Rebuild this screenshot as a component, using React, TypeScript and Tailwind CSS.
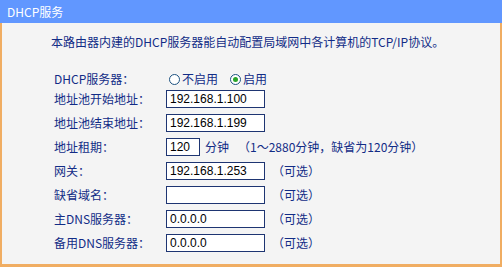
const FONT = "font-['SimSun','Noto_Sans_CJK_SC',sans-serif]";

type Row = {
  label: string;
  value?: string;
  width?: string;
  note?: React.ReactNode;
};

const ROWS: Row[] = [
  { label: "地址池开始地址：", value: "192.168.1.100" },
  { label: "地址池结束地址：", value: "192.168.1.199" },
  {
    label: "地址租期：",
    value: "120",
    width: "w-[34px]",
    note: (
      <>
        <span className="ml-[5px]">分钟</span>
        <span className="ml-[9px]">（1～2880分钟，缺省为120分钟）</span>
      </>
    ),
  },
  { label: "网关：", value: "192.168.1.253", note: "（可选）" },
  { label: "缺省域名：", value: "", note: "（可选）" },
  { label: "主DNS服务器：", value: "0.0.0.0", note: "（可选）" },
  { label: "备用DNS服务器：", value: "0.0.0.0", note: "（可选）" },
];

function Radio({ checked, label }: { checked?: boolean; label: string }) {
  return (
    <span className="flex items-center">
      <span className="w-[11px] h-[11px] rounded-full border border-[#1c5180] bg-white flex items-center justify-center">
        {checked && <span className="w-[5px] h-[5px] rounded-full bg-[#2aa52a]" />}
      </span>
      <span className="ml-[2px]">{label}</span>
    </span>
  );
}

export default function App() {
  return (
    <div className={`w-[502px] h-[267px] flex flex-col text-[12px] leading-[16px] text-[#122c86] ${FONT}`}>
      {/* 标题栏 */}
      <div className="h-[23px] bg-[#6197ff] text-white flex items-center pl-[7px] shrink-0">
        DHCP服务
      </div>

      <div className="flex-1 bg-[#f4f4f4] border-l-2 border-r-2 border-b-[3px] border-[#f0ad62] pl-[49px]">
        <p className="mt-[11px]">
          本路由器内建的DHCP服务器能自动配置局域网中各计算机的TCP/IP协议。
        </p>

        {/* DHCP 开关 */}
        <div className="mt-[21px] h-[16px] flex items-center pl-[3px]">
          <span className="w-[113px]">DHCP服务器：</span>
          <span className="flex items-center gap-[12px] ml-[2px]">
            <Radio label="不启用" />
            <Radio checked label="启用" />
          </span>
        </div>

        {ROWS.map((row) => (
          <div key={row.label} className="h-[24px] flex items-center pl-[3px]">
            <span className="w-[112px] shrink-0">{row.label}</span>
            <span
              className={`${row.width ?? "w-[99px]"} h-[18px] border border-[#1e3572] bg-white pl-[3px] flex items-center text-black font-['Liberation_Sans',sans-serif] text-[12px]`}
            >
              {row.value}
            </span>
            {row.note && (
              <span className={typeof row.note === "string" ? "ml-[7px]" : "flex"}>{row.note}</span>
            )}
          </div>
        ))}
      </div>
    </div>
  );
}
